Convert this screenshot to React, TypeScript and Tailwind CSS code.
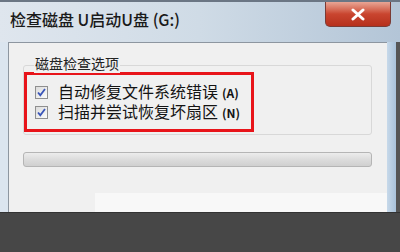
import React from 'react';

const cjk = { fontFamily: '"Noto Sans CJK SC", "Noto Sans", sans-serif' };

function CheckBox() {
  return (
    <span className="flex h-[13px] w-[13px] shrink-0 items-center justify-center border border-[#8f8f8f] bg-gradient-to-br from-[#dcdcdc] to-[#fbfbfb]">
      <svg width="11" height="11" viewBox="0 0 11 11">
        <path d="M2 5.5 L4.3 8.2 L9 2" fill="none" stroke="#3a55b8" strokeWidth="1.8" />
      </svg>
    </span>
  );
}

function Option({ label, hotkey }: { label: string; hotkey: string }) {
  return (
    <div className="flex h-[20px] items-center gap-[10px]">
      <CheckBox />
      <span className="text-[16px] leading-[20px] text-[#141414]">
        {label}
        <span className="ml-[4px] text-[12px] font-semibold">({hotkey})</span>
      </span>
    </div>
  );
}

export default function App() {
  return (
    <div className="flex h-[252px] w-[400px] flex-col overflow-hidden bg-[#474747]" style={cjk}>
      <div className="flex h-[212px] flex-col bg-gradient-to-r from-[#dfe6ee] via-[#cfdbe6] to-[#b3c5d7] border-t-[2px] border-[#6b7684]">
        {/* title bar */}
        <div className="flex h-[40px] items-start justify-between">
          <div className="pl-[10px] pt-[6px] text-[16px] font-medium leading-[22px] text-[#1a1a1a]">
            检查磁盘 U启动U盘 (G:)
          </div>
          <div className="mr-[9px] flex h-[25px] w-[66px] items-center justify-center rounded-b-[5px] border border-t-0 border-[#7a3b35] bg-gradient-to-b from-[#e8a595] via-[#c9452f] to-[#b6301c]">
            <svg width="16" height="13" viewBox="0 0 16 13">
              <path d="M3 2 L13 11 M13 2 L3 11" stroke="#fff" strokeWidth="3" strokeLinecap="round" />
            </svg>
          </div>
        </div>
        {/* body */}
        <div className="flex flex-1">
          <div className="w-[8px] bg-[#dbe5ef]" />
          <div className="flex flex-1 flex-col border-l border-t border-[#8d96a0] bg-[#f0f0f0] pl-[14px] pr-[15px] pt-[22px]">
            <div className="relative rounded-[3px] border border-[#d8d8d8] pb-[2px]">
              <div className="absolute left-[10px] top-[-13px] bg-[#f0f0f0] px-[1px] text-[14px] leading-[20px] text-[#222]">
                磁盘检查选项
              </div>
              <div className="mt-[6px] w-[230px] border-[3px] border-[#e8141a] py-[7px] pl-[8px]">
                <Option label="自动修复文件系统错误" hotkey="A" />
                <Option label="扫描并尝试恢复坏扇区" hotkey="N" />
              </div>
            </div>
            <div className="mt-[17px] h-[15px] rounded-[3px] border border-[#b5b5b5] bg-gradient-to-b from-[#ececec] via-[#dcdcdc] to-[#d0d0d0]" />
            <div className="-mr-[15px] mt-[26px] ml-[72px] flex-1 bg-[#f8f8f8]" />
          </div>
          <div className="w-[9px] bg-gradient-to-r from-[#c7d9ea] to-[#a9c2da]" />
          <div className="w-[4px] bg-[#555]" />
        </div>
      </div>
      <div className="flex-1 border-t border-[#333] bg-[#474747]" />
    </div>
  );
}
